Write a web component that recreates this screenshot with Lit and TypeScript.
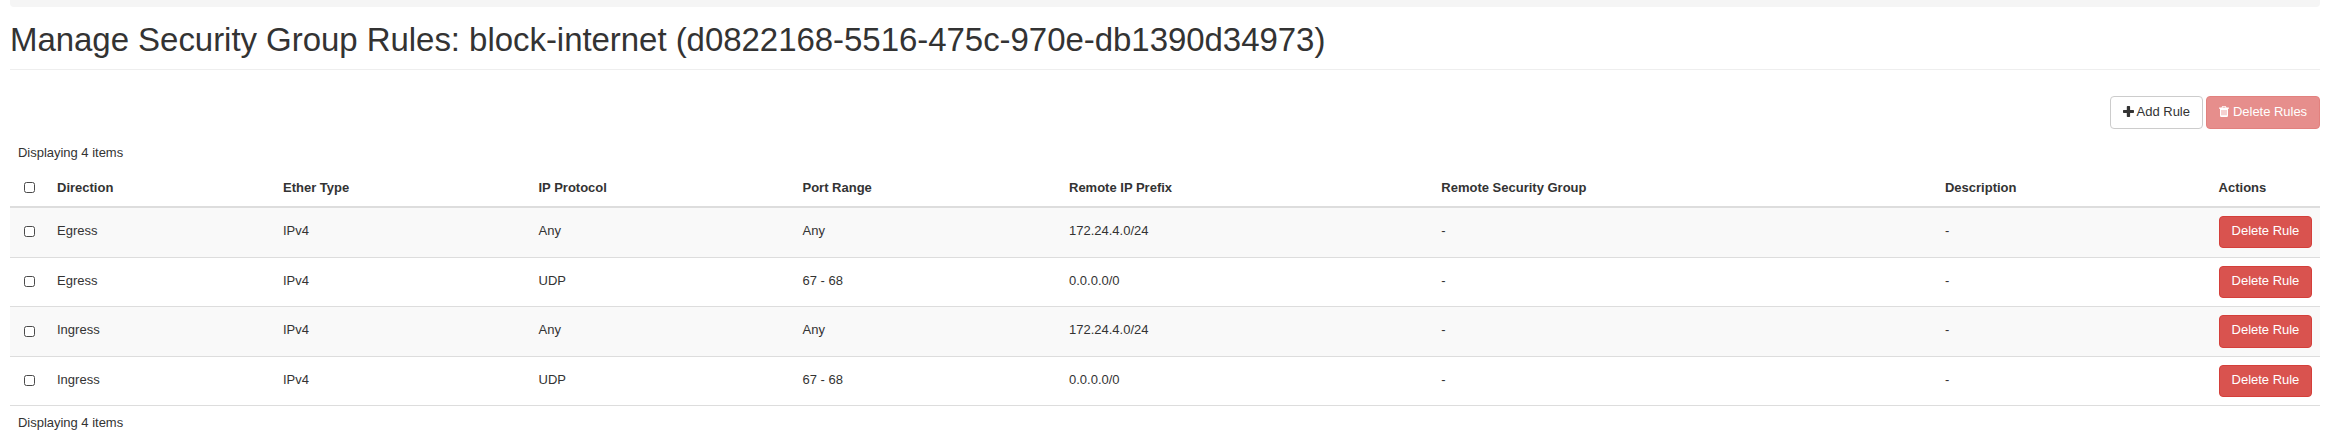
import { LitElement, html, css, svg } from "lit";
import { customElement, state } from "lit/decorators.js";

interface Rule {
  direction: string;
  etherType: string;
  protocol: string;
  ports: string;
  prefix: string;
}

const COLUMNS = [
  { label: "Direction", width: 226 },
  { label: "Ether Type", width: 255.5 },
  { label: "IP Protocol", width: 264 },
  { label: "Port Range", width: 266.5 },
  { label: "Remote IP Prefix", width: 372.3 },
  { label: "Remote Security Group", width: 503.7 },
  { label: "Description", width: 273.6 },
  { label: "Actions", width: 109 },
];

const plusIcon = svg`<svg class="icon plus" viewBox="0 0 11 11" aria-hidden="true">
  <path fill="currentColor" d="M4.500 0h1.900q.7 0 .7.7v3.200h3.100q.8 0 .8.7v1.600q0 .7-.8.7H7.100v3.300q0 .8-.7.8H4.500q-.7 0-.7-.8V6.900H.7Q0 6.900 0 6.200V4.600q0-.7.7-.7h3.100V.7q0-.7.7-.7z"/>
</svg>`;

const trashIcon = svg`<svg class="icon trash" viewBox="0 0 10 11" aria-hidden="true">
  <path fill="currentColor" fill-rule="evenodd" d="M3.600 0h2.800q.4 0 .6.400l.4 1.100h2.200q.4 0 .4.300v.7q0 .3-.4.300H9v6.700q0 1.500-1.200 1.500H2.200Q1 11 1 9.500V2.800H.4Q0 2.800 0 2.500v-.7q0-.3.4-.3h2.200L3 .4q.2-.4.600-.4zM3.800.8l-.3.7h3l-.3-.7zM2.600 4v5.200h.8V4zM4.600 4v5.200h.8V4zM6.600 4v5.200h.8V4z"/>
</svg>`;

@customElement("app-root")
export class AppRoot extends LitElement {
  @state() private rules: Rule[] = [
    { direction: "Egress", etherType: "IPv4", protocol: "Any", ports: "Any", prefix: "172.24.4.0/24" },
    { direction: "Egress", etherType: "IPv4", protocol: "UDP", ports: "67 - 68", prefix: "0.0.0.0/0" },
    { direction: "Ingress", etherType: "IPv4", protocol: "Any", ports: "Any", prefix: "172.24.4.0/24" },
    { direction: "Ingress", etherType: "IPv4", protocol: "UDP", ports: "67 - 68", prefix: "0.0.0.0/0" },
  ];

  static styles = css`
    :host {
      display: block;
      box-sizing: border-box;
      height: 432px;
      overflow: hidden;
      padding: 0 15px 0 10px;
      background: #fff;
      color: #333;
      font: 13px/18.57px "Liberation Sans", Arial, sans-serif;
    }
    * { box-sizing: border-box; }
    .crumbs {
      height: 7px;
      background: #f5f5f5;
      border-radius: 0 0 4px 4px;
    }
    .title {
      height: 63px;
      margin: 0;
      padding-top: 15px;
      border-bottom: 1px solid #eee;
      font-size: 33px;
      font-weight: 400;
      line-height: 36px;
      letter-spacing: -0.045px;
      white-space: nowrap;
    }
    .toolbar {
      display: flex;
      justify-content: flex-end;
      gap: 3px;
      padding-top: 26px;
      height: 66px;
    }
    .btn {
      display: inline-flex;
      align-items: flex-start;
      justify-content: flex-start;
      height: 32.57px;
      padding: 5px 0 0 12px;
      width: 93px;
      border: 1px solid #ccc;
      border-radius: 4px;
      background: #fff;
      color: #333;
      font: inherit;
      letter-spacing: -0.02px;
      white-space: nowrap;
    }
    .toolbar .btn { height: 33px; padding: 6px 0 0 11.500px; letter-spacing: 0; }
    .danger { background: #d9534f; border-color: #d43f3a; color: #fff; }
    .toolbar .bulk { width: 114px; padding-left: 12px; opacity: .65; letter-spacing: -0.03px; }
    .icon { flex: none; display: block; width: 11px; height: 11px; }
    .plus { margin: 3px 3px 0 0; }
    .trash { width: 10px; margin: 3px 4px 0 0; }
    .table { display: grid; }
    .note { padding: 7.500px 8px 0; height: 34.57px; letter-spacing: -0.02px; }
    .row {
      display: flex;
      height: 49.57px;
      border-top: 1px solid #ddd;
    }
    .row:nth-child(odd) { background: #f9f9f9; }
    .row:first-child { border-top: 0; height: 48.9px; }
    .head {
      display: flex;
      height: 37.27px;
      padding-top: 0.7px;
      border-bottom: 2px solid #ddd;
      font-weight: 700;
    }
    .cell { flex: none; padding: 8px 0 0 8px; }
    .row .cell { padding-top: 14px; }
    .row:first-child .cell { padding-top: 14.500px; }
    .row .action, .row:first-child .action { padding-top: 8px; }
    .check { flex: none; width: 39px; padding: 11px 0 0 14px; }
    .row .check { padding-top: 18.300px; }
    .row:first-child .check { padding-top: 18.500px; }
    .box {
      appearance: none;
      display: block;
      width: 11px;
      height: 11px;
      margin: 0;
      border: 1px solid #4a4a4a;
      border-radius: 2.500px;
      background: #fff;
    }
    .foot { border-top: 1px solid #ddd; }
  `;

  private cell(index: number, content: unknown, extra = "") {
    return html`<div class="cell ${extra}" style="width:${COLUMNS[index].width}px">${content}</div>`;
  }

  render() {
    const count = `Displaying ${this.rules.length} items`;
    return html`
      <div class="crumbs"></div>
      <h1 class="title">Manage Security Group Rules: block-internet (d0822168-5516-475c-970e-db1390d34973)</h1>
      <div class="toolbar">
        <button class="btn">${plusIcon}Add Rule</button>
        <button class="btn danger bulk" disabled>${trashIcon}Delete Rules</button>
      </div>
      <div class="table">
        <div class="note">${count}</div>
        <div class="head">
          <div class="check"><input class="box" type="checkbox" aria-label="Select all" /></div>
          ${COLUMNS.map((c, i) => this.cell(i, c.label))}
        </div>
        <div class="body">
          ${this.rules.map(
            (r) => html`<div class="row">
              <div class="check"><input class="box" type="checkbox" aria-label="Select rule" /></div>
              ${[r.direction, r.etherType, r.protocol, r.ports, r.prefix, "-", "-"].map((v, i) => this.cell(i, v))}
              ${this.cell(7, html`<button class="btn danger">Delete Rule</button>`, "action")}
            </div>`
          )}
        </div>
        <div class="note foot">${count}</div>
      </div>
    `;
  }
}
